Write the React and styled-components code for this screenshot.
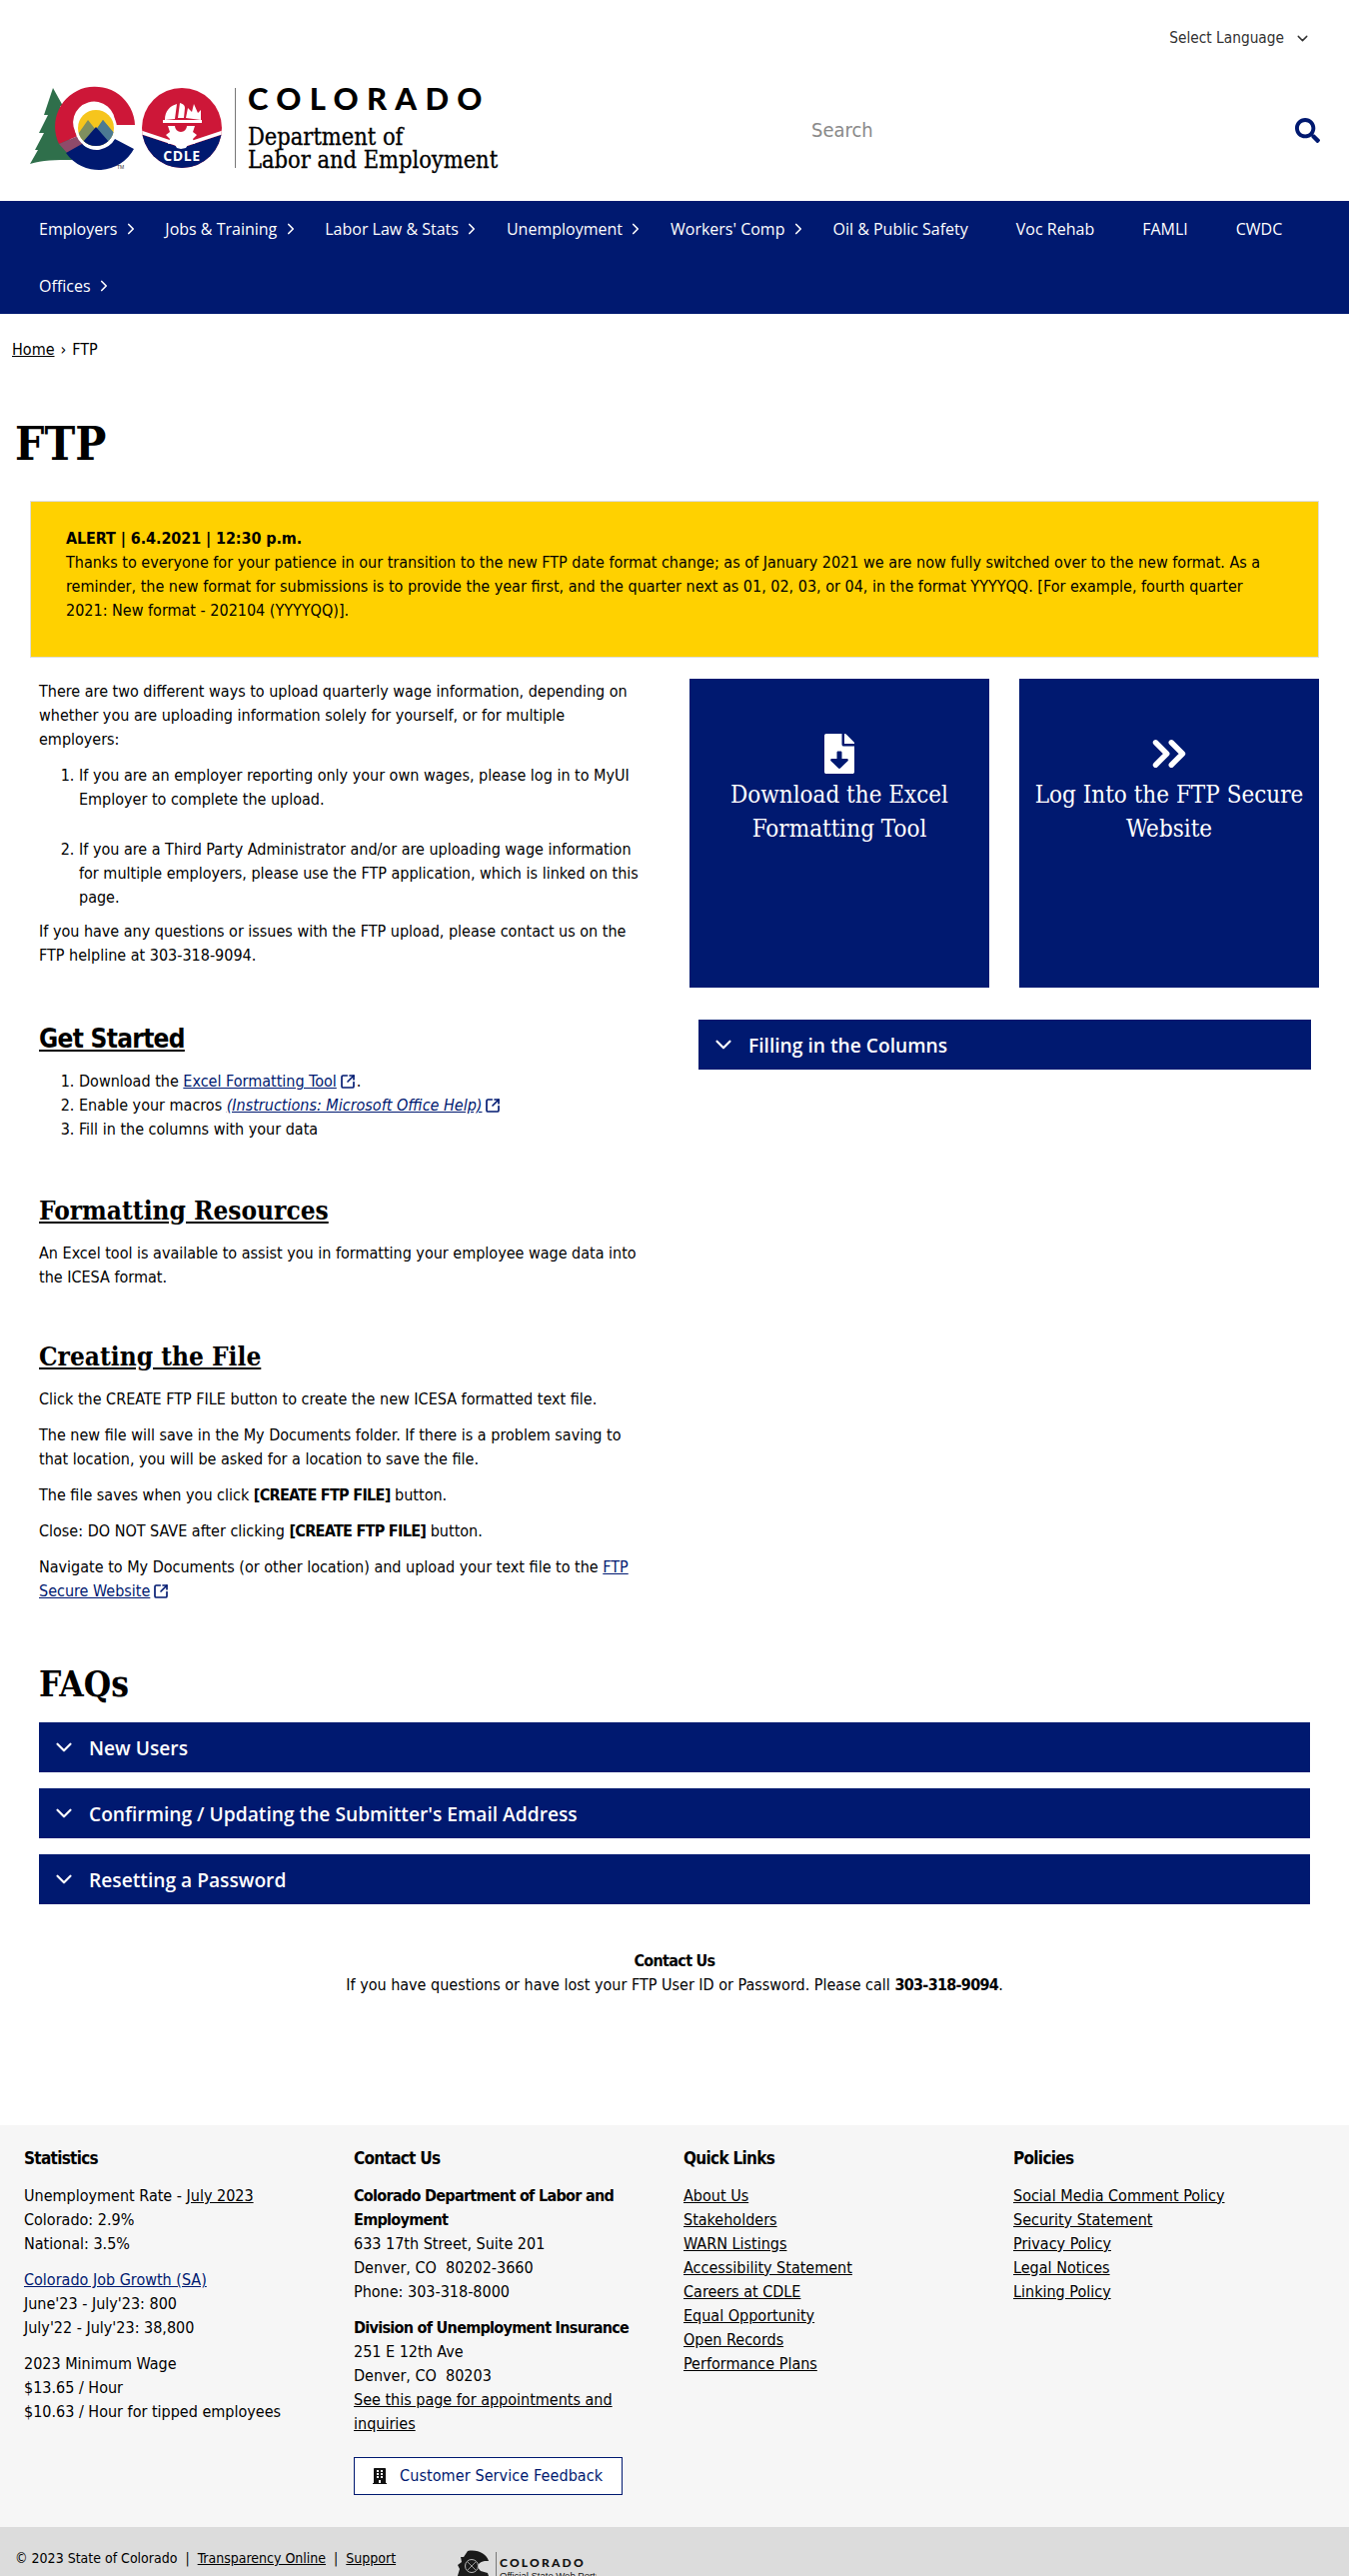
import React from 'react';
import styled, { createGlobalStyle } from 'styled-components';
import { ChevronDown, ChevronRight, ChevronsRight, SquareArrowOutUpRight } from 'lucide-react';
import { FaSearch, FaFileDownload, FaBuilding } from 'react-icons/fa';

const NAVY = '#001970';
const BODY = '"DejaVu Sans Condensed", "DejaVu Sans", sans-serif';
const SLAB = '"DejaVu Serif Condensed", "DejaVu Serif", serif';
const UI = '"Open Sans", "Noto Sans", sans-serif';

const Global = createGlobalStyle`
  html, body { margin: 0; padding: 0; background: #fff; }
  body { font-family: ${BODY}; font-size: 16px; line-height: 24px; color: #000; }
  #root { height: 2577px; overflow: hidden; }
  * { box-sizing: border-box; }
  svg { flex-shrink: 0; }
`;

const TopBar = styled.div`
  height: 75px; display: flex; justify-content: flex-end; padding: 26px 38px 0 0;
`;
const LangSelect = styled.div`
  display: flex; align-items: center; gap: 10px; height: 24px; font-size: 15.3px; color: #333;
`;
const Masthead = styled.header`
  height: 126px; display: flex; padding-left: 20px;
`;
const LogoArt = styled.svg`
  display: block; width: 490px; height: 100px;
`;
const SearchBox = styled.form`
  margin-left: auto; width: 509px; height: 42px; margin-top: 34px; margin-right: 29px;
  display: flex; align-items: center; justify-content: space-between;
`;
const SearchInput = styled.input`
  border: 0; outline: 0; background: transparent; padding: 0; flex: 1;
  font-family: ${BODY}; font-size: 20px; color: #666;
  &::placeholder { color: #8a8a8a; opacity: 1; }
`;
const SearchIcon = styled(FaSearch)`
  color: ${NAVY}; font-size: 25px; display: block;
`;
const Nav = styled.nav`
  background: ${NAVY}; display: flex; flex-wrap: wrap; padding: 0 15px; min-height: 113px;
`;
const NavItem = styled.a`
  display: flex; align-items: center; height: 56.5px; padding-left: 24px;
  font-family: ${UI}; font-size: 16px; color: #fff;
`;
const NavArrow = styled.span`
  width: 24px; display: flex; justify-content: center; padding-left: 3px; color: #fff;
`;
const Crumbs = styled.div`
  padding: 24px 12px 0; font-size: 16px; height: 72px; display: flex; gap: 6px; align-items: flex-start;
`;
const CrumbLink = styled.a`
  color: #000; text-decoration: underline;
`;
const PageTitle = styled.h1`
  margin: 0; height: 115px; padding: 29px 0 0 15px; font-family: ${SLAB}; font-weight: 700; font-size: 46px; line-height: 58px;
`;
const Alert = styled.section`
  margin: 0 30px; height: 157px; background: #ffd100; border: 1px solid #ddd; padding: 25px 35px;
`;
const AlertHead = styled.strong`
  display: block; letter-spacing: -0.1px;
`;
const Strong = styled.strong`
  letter-spacing: -0.7px;
`;
const Columns = styled.div`
  display: grid; grid-template-columns: 660px 660px; padding: 21px 15px 0;
`;
const LeftCol = styled.div`
  padding: 1px 28px 0 24px;
`;
const RightCol = styled.div`
  display: flex; flex-direction: column;
`;
const Para = styled.p`
  margin: 0 0 12px;
`;
const Steps = styled.ol`
  margin: 0; padding: 0 0 0 40px;
`;
const Step = styled.li`
  margin-bottom: ${p => p.$gap || 0}px;
`;
const Section = styled.h2`
  margin: ${p => p.$top}px 0 14px; font-family: ${p => (p.$sans ? BODY : SLAB)};
  letter-spacing: ${p => (p.$sans ? '-0.7px' : '0')};
  font-weight: 700; font-size: 26px; line-height: 34px; text-decoration: underline;
`;
const TextLink = styled.a`
  color: ${NAVY}; text-decoration: underline;
`;
const ItalicLink = styled(TextLink)`
  font-style: italic;
`;
const LinkIcon = styled(SquareArrowOutUpRight).attrs({ strokeWidth: 2.5 })`
  display: inline-block; width: 16px; height: 16px; margin: 0 1px 0 3px; vertical-align: -3px; color: ${NAVY};
`;
const Tiles = styled.div`
  display: grid; grid-template-columns: 300px 300px; gap: 30px; padding: 0 15px;
`;
const Tile = styled.a`
  height: 309px; background: ${NAVY}; color: #fff; display: flex; flex-direction: column; align-items: center;
  padding: 51px 10px 0; text-align: center; font-family: ${SLAB}; font-size: 24px; line-height: 34px;
`;
const TileIcon = styled.span`
  height: 48px; display: flex; align-items: center; justify-content: center;
`;
const Accordion = styled.button`
  width: 100%; height: 50px; background: ${NAVY}; color: #fff; border: 0; display: flex; align-items: center;
  gap: 12px; padding: 0 0 0 12px; font-family: ${UI}; font-weight: 600; font-size: 19.2px; text-align: left;
`;
const RightAccordions = styled.div`
  margin: 32px 23px 0 24px;
`;
const Faq = styled.section`
  padding: 0 39px; margin-top: 47px;
`;
const FaqTitle = styled.h2`
  margin: 0 0 16px; font-family: ${SLAB}; font-weight: 700; font-size: 35px; line-height: 44px;
`;
const AccordionStack = styled.div`
  display: flex; flex-direction: column; gap: 16px;
`;
const ContactNote = styled.div`
  margin-top: 45px; text-align: center;
`;
const Footer = styled.footer`
  margin-top: 128px; background: #f6f6f6; height: 402px; display: grid; grid-template-columns: repeat(4, 330px);
  padding: 21px 0 0 24px;
`;
const FootCol = styled.div`
  padding-right: 24px;
`;
const FootTitle = styled.h3`
  margin: 0 0 14px; font-size: 17px; line-height: 24px; font-weight: 700; letter-spacing: -0.7px;
`;
const FootBlock = styled.p`
  margin: 0 0 12px;
`;
const BlackLink = styled.a`
  color: #000; text-decoration: underline;
`;
const FootList = styled.div`
  display: flex; flex-direction: column;
`;
const FeedbackBtn = styled.a`
  margin-top: 21px; display: flex; align-items: center; gap: 12px; width: 269px; height: 38px; padding-left: 17px;
  background: #fff; border: 1px solid ${NAVY}; color: ${NAVY}; letter-spacing: 0.1px;
`;
const BottomBar = styled.div`
  background: #dcdcdc; height: 60px; display: flex; padding: 19px 0 0 15px; font-size: 14px;
`;
const Legal = styled.div`
  width: 442px; white-space: pre;
`;
const StateLogo = styled.svg`
  display: block; width: 140px; height: 60px; margin-top: -15px;
`;

const CLogo = () => (
  <LogoArt viewBox="20 75 490 100" role="img" aria-label="Colorado Department of Labor and Employment">
    <defs>
      <clipPath id="sun"><circle cx="96" cy="128" r="18" /></clipPath>
      <clipPath id="badge"><circle cx="182" cy="128" r="40" /></clipPath>
    </defs>
    <path d="M53 88 L63 106 L60 106 L68 122 L72 160 C56 160 42 160 30 164 L38 150 L35 150 L44 133 L39 133 L48 115 L44 115 Z" fill="#2f6f4b" />
    <path d="M135 125 A40 40 0 1 0 59 144 L78 136 A21 21 0 1 1 115 125 Z" fill="#cd1738" />
    <path d="M59 144 L78 136 L84 144 L68 154 Z" fill="#8f4a6a" />
    <path d="M66 153 A40 40 0 0 0 134 149 L115 139 A21 21 0 0 1 82 144 Z" fill="#001970" />
    <circle cx="96" cy="128" r="21" fill="#fff" />
    <g clipPath="url(#sun)">
      <rect x="76" y="108" width="40" height="40" fill="#f6c51c" />
      <path d="M74 140 L88 120 L96 130 L103 120 L120 140 L120 150 L74 150 Z" fill="#7f8f5f" />
      <path d="M96 130 L103 120 L120 140 L110 145 Z" fill="#4c7a92" />
      <path d="M76 150 L96 127 L116 150 Z" fill="#001970" />
    </g>
    <text x="117" y="169" fontSize="5" fontFamily="Liberation Sans" fill="#333">TM</text>
    <g clipPath="url(#badge)">
      <rect x="140" y="86" width="84" height="84" fill="#cd1738" />
      <path d="M140 134 L182 148 L224 134 L224 170 L140 170 Z" fill="#001970" />
      <path d="M140 132 L182 146 L224 132" fill="none" stroke="#fff" strokeWidth="3.5" />
    </g>
    <path d="M165 120 C165 111 170 106 177 104 L175 119 Z M178 118 L180 103 C184 104 185 106 185 108 L184 118 Z" fill="#fff" />
    <path d="M186 118 L188 108 L192 112 L194 104 L198 113 L201 110 L201 120 Z" fill="#fff" />
    <rect x="163" y="120" width="39" height="3" fill="#fff" />
    <path d="M168 126 L175 126 A6 6 0 0 0 187 126 L195 126 L193 132 L197 135 L193 139 L195 144 L189 143 L186 148 L181 149 L177 148 L174 143 L168 144 L170 139 L166 135 L170 132 Z" fill="#fff" />
    <text x="182" y="161" textAnchor="middle" fontSize="14" fontWeight="700" fontFamily="Open Sans" letterSpacing="0.6" fill="#fff">CDLE</text>
    <rect x="235" y="88" width="1" height="80" fill="#777" />
    <text x="248" y="110" fontSize="31" fontWeight="900" fontFamily="Lato" letterSpacing="8.3" fill="#000">COLORADO</text>
    <text x="248" y="145" fontSize="23.4" fontFamily="DejaVu Serif Condensed" stroke="#000" strokeWidth="0.3" fill="#000">Department of</text>
    <text x="248" y="168" fontSize="23.4" fontFamily="DejaVu Serif Condensed" stroke="#000" strokeWidth="0.3" fill="#000">Labor and Employment</text>
  </LogoArt>
);

const navItems = [
  ['Employers', 1], ['Jobs & Training', 1], ['Labor Law & Stats', 1], ['Unemployment', 1], ["Workers' Comp", 1],
  ['Oil & Public Safety', 0], ['Voc Rehab', 0], ['FAMLI', 0], ['CWDC', 0], ['Offices', 1],
];

const Chev = () => <ChevronDown size={26} strokeWidth={2} />;

export default function App() {
  return (
    <>
      <Global />
      <TopBar>
        <LangSelect>Select Language <ChevronDown size={17} strokeWidth={2} /></LangSelect>
      </TopBar>
      <Masthead>
        <CLogo />
        <SearchBox>
          <SearchInput placeholder="Search" aria-label="Search" />
          <SearchIcon />
        </SearchBox>
      </Masthead>
      <Nav>
        {navItems.map(([label, more]) => (
          <NavItem key={label}>
            {label}
            <NavArrow>{more ? <ChevronRight size={18} strokeWidth={2.2} /> : null}</NavArrow>
          </NavItem>
        ))}
      </Nav>
      <Crumbs><CrumbLink>Home</CrumbLink> › <span>FTP</span></Crumbs>
      <PageTitle>FTP</PageTitle>
      <Alert>
        <AlertHead>ALERT | 6.4.2021 | 12:30 p.m.</AlertHead>
        Thanks to everyone for your patience in our transition to the new FTP date format change; as of January 2021 we are now fully switched over to the new format. As a reminder, the new format for submissions is to provide the year first, and the quarter next as 01, 02, 03, or 04, in the format YYYYQQ. [For example, fourth quarter 2021: New format - 202104 (YYYYQQ)].
      </Alert>
      <Columns>
        <LeftCol>
          <Para>There are two different ways to upload quarterly wage information, depending on whether you are uploading information solely for yourself, or for multiple employers:</Para>
          <Steps>
            <Step $gap={26}>If you are an employer reporting only your own wages, please log in to MyUI Employer to complete the upload.</Step>
            <Step $gap={10}>If you are a Third Party Administrator and/or are uploading wage information for multiple employers, please use the FTP application, which is linked on this page.</Step>
          </Steps>
          <Para>If you have any questions or issues with the FTP upload, please contact us on the FTP helpline at 303-318-9094.</Para>
          <Section $top={54} $sans>Get Started</Section>
          <Steps>
            <Step>Download the <TextLink>Excel Formatting Tool</TextLink><LinkIcon />.</Step>
            <Step>Enable your macros <ItalicLink>(Instructions: Microsoft Office Help)</ItalicLink><LinkIcon /></Step>
            <Step>Fill in the columns with your data</Step>
          </Steps>
          <Section $top={52}>Formatting Resources</Section>
          <Para>An Excel tool is available to assist you in formatting your employee wage data into the ICESA format.</Para>
          <Section $top={50}>Creating the File</Section>
          <Para>Click the CREATE FTP FILE button to create the new ICESA formatted text file.</Para>
          <Para>The new file will save in the My Documents folder. If there is a problem saving to that location, you will be asked for a location to save the file.</Para>
          <Para>The file saves when you click <Strong>[CREATE FTP FILE]</Strong> button.</Para>
          <Para>Close: DO NOT SAVE after clicking <Strong>[CREATE FTP FILE]</Strong> button.</Para>
          <Para>Navigate to My Documents (or other location) and upload your text file to the <TextLink>FTP Secure Website</TextLink><LinkIcon /></Para>
        </LeftCol>
        <RightCol>
          <Tiles>
            <Tile>
              <TileIcon><FaFileDownload size={40} /></TileIcon>
              Download the Excel Formatting Tool
            </Tile>
            <Tile>
              <TileIcon><ChevronsRight size={54} strokeWidth={2.4} /></TileIcon>
              Log Into the FTP Secure Website
            </Tile>
          </Tiles>
          <RightAccordions>
            <Accordion><Chev />Filling in the Columns</Accordion>
          </RightAccordions>
        </RightCol>
      </Columns>
      <Faq>
        <FaqTitle>FAQs</FaqTitle>
        <AccordionStack>
          <Accordion><Chev />New Users</Accordion>
          <Accordion><Chev />Confirming / Updating the Submitter's Email Address</Accordion>
          <Accordion><Chev />Resetting a Password</Accordion>
        </AccordionStack>
        <ContactNote>
          <Strong>Contact Us</Strong><br />
          If you have questions or have lost your FTP User ID or Password. Please call <Strong>303-318-9094</Strong>.
        </ContactNote>
      </Faq>
      <Footer>
        <FootCol>
          <FootTitle>Statistics</FootTitle>
          <FootBlock>Unemployment Rate - <BlackLink>July 2023</BlackLink><br />Colorado: 2.9%<br />National: 3.5%</FootBlock>
          <FootBlock><TextLink>Colorado Job Growth (SA)</TextLink><br />June'23 - July'23: 800<br />July'22 - July'23: 38,800</FootBlock>
          <FootBlock>2023 Minimum Wage<br />$13.65 / Hour<br />$10.63 / Hour for tipped employees</FootBlock>
        </FootCol>
        <FootCol>
          <FootTitle>Contact Us</FootTitle>
          <FootBlock><Strong>Colorado Department of Labor and Employment</Strong><br />633 17th Street, Suite 201<br />Denver, CO&nbsp; 80202-3660<br />Phone: 303-318-8000</FootBlock>
          <FootBlock><Strong>Division of Unemployment Insurance</Strong><br />251 E 12th Ave<br />Denver, CO&nbsp; 80203<br /><BlackLink>See this page for appointments and inquiries</BlackLink></FootBlock>
          <FeedbackBtn><FaBuilding size={16} color="#111" />Customer Service Feedback</FeedbackBtn>
        </FootCol>
        <FootCol>
          <FootTitle>Quick Links</FootTitle>
          <FootList>
            {['About Us', 'Stakeholders', 'WARN Listings', 'Accessibility Statement', 'Careers at CDLE', 'Equal Opportunity', 'Open Records', 'Performance Plans'].map(t => <div key={t}><BlackLink>{t}</BlackLink></div>)}
          </FootList>
        </FootCol>
        <FootCol>
          <FootTitle>Policies</FootTitle>
          <FootList>
            {['Social Media Comment Policy', 'Security Statement', 'Privacy Policy', 'Legal Notices', 'Linking Policy'].map(t => <div key={t}><BlackLink>{t}</BlackLink></div>)}
          </FootList>
        </FootCol>
      </Footer>
      <BottomBar>
        <Legal>© 2023 State of Colorado  |  <BlackLink>Transparency Online</BlackLink>  |  <BlackLink>Support</BlackLink></Legal>
        <StateLogo viewBox="457 2532 140 60" role="img" aria-label="Colorado Official State Web Portal">
          <path d="M468 2552 L464 2558 L461 2558 L462 2563 L458 2566 L460 2570 L457 2580 L490 2580 L488 2574 L481 2572 C476 2568 478 2561 489 2562 C487 2555 478 2550 468 2552 Z" fill="#1a1a1a" />
          <circle cx="472" cy="2567" r="6.5" fill="none" stroke="#bbb" strokeWidth="1" />
          <path d="M468 2571 L476 2563 M468 2563 L476 2571" stroke="#bbb" strokeWidth="0.8" />
          <rect x="496" y="2553" width="1" height="27" fill="#777" />
          <text x="500" y="2568" fontSize="12" fontWeight="900" fontFamily="Lato" letterSpacing="2.2" fill="#111">COLORADO</text>
          <text x="500" y="2580" fontSize="9.5" fontFamily="Liberation Sans" fill="#111">Official State Web Portal</text>
        </StateLogo>
      </BottomBar>
    </>
  );
}
